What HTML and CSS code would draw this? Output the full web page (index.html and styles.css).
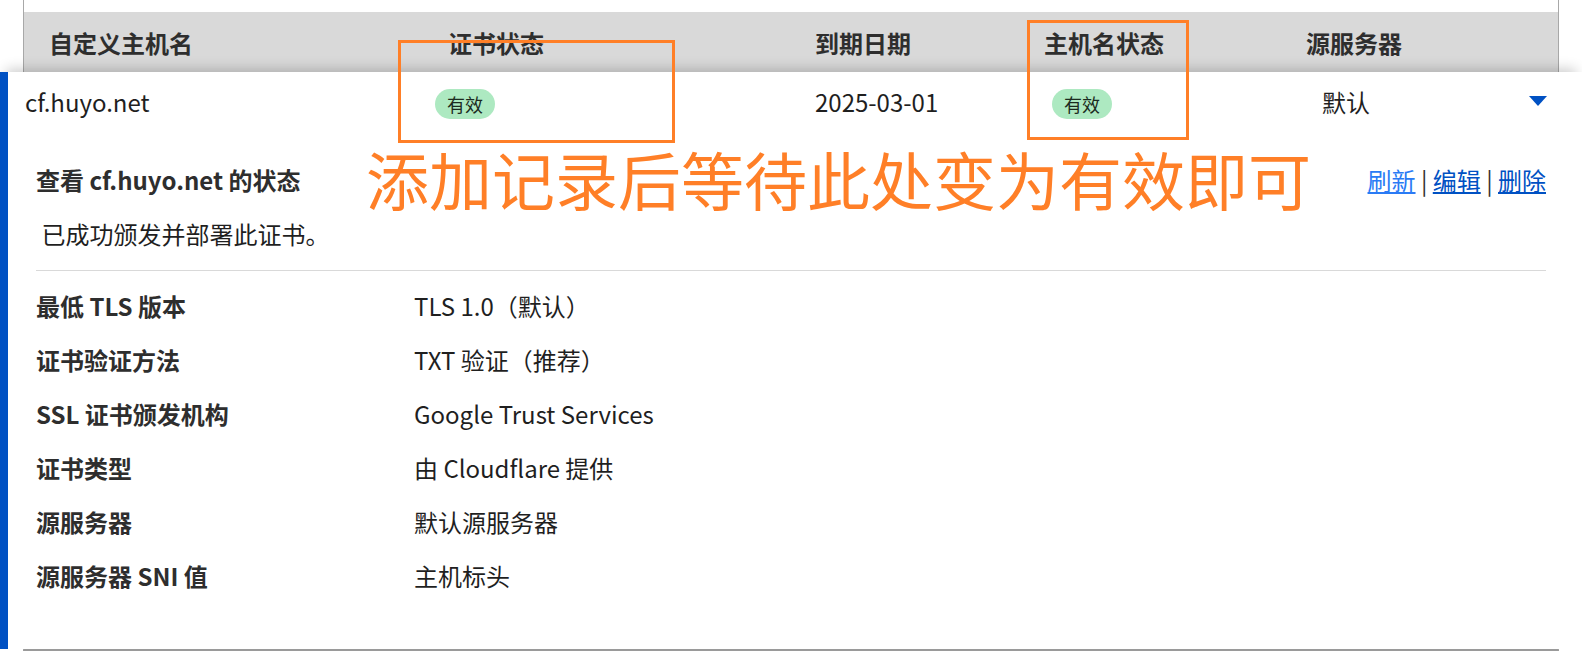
FILE: index.html
```html
<!DOCTYPE html>
<html lang="zh-CN">
<head>
    <meta charset="UTF-8">
    <meta name="viewport" content="width=device-width, initial-scale=1.0">
    <title>自定义主机名</title>
    <link rel="stylesheet" href="styles.css">
</head>
<body>

    <div class="table">
        <div class="thead">
            <div>自定义主机名</div>
            <div>证书状态</div>
            <div>到期日期</div>
            <div>主机名状态</div>
            <div>源服务器</div>
        </div>

        <div class="card">
            <div class="row">
                <div>cf.huyo.net</div>
                <div><span class="badge">有效</span></div>
                <div>2025-03-01</div>
                <div><span class="badge">有效</span></div>
                <div>默认</div>
                <div class="caret"></div>
            </div>

            <div class="detail">
                <div class="detail-head">
                    <h2 class="detail-title">查看 cf.huyo.net 的状态</h2>
                    <div class="actions">
                        <a href="#" class="link active">刷新</a> | <a href="#" class="link">编辑</a> | <a href="#" class="link">删除</a>
                    </div>
                </div>
                <p class="detail-note">&nbsp;已成功颁发并部署此证书。</p>

                <dl class="props">
                    <div class="prop"><dt>最低 TLS 版本</dt><dd>TLS 1.0（默认）</dd></div>
                    <div class="prop"><dt>证书验证方法</dt><dd>TXT 验证（推荐）</dd></div>
                    <div class="prop"><dt>SSL 证书颁发机构</dt><dd>Google Trust Services</dd></div>
                    <div class="prop"><dt>证书类型</dt><dd>由 Cloudflare 提供</dd></div>
                    <div class="prop"><dt>源服务器</dt><dd>默认源服务器</dd></div>
                    <div class="prop"><dt>源服务器 SNI 值</dt><dd>主机标头</dd></div>
                </dl>
            </div>
        </div>
    </div>

    <!-- annotations drawn over the screenshot -->
    <div class="mark mark-cert"></div>
    <div class="mark mark-host"></div>
    <div class="note">添加记录后等待此处变为有效即可</div>

</body>
</html>
```

FILE: styles.css
```css
body {
    margin: 0;
    position: relative;
    font-family: "Noto Sans CJK SC", "Noto Sans", sans-serif;
    font-size: 24px;
    color: #1f1f1f;
    background: #fff;
    overflow: hidden;
}

.table {
    margin: 0 23px;
    padding-top: 12px;
    border-left: 1px solid #a8a8a8;
    border-right: 1px solid #a8a8a8;
    border-bottom: 2px solid #9a9a9a;
}

.thead {
    display: grid;
    grid-template-columns: 399px 367px 229px 262px 1fr;
    align-items: center;
    height: 60px;
    padding-left: 25px;
    background: #d9d9d9;
    font-weight: bold;
    color: #2e2e2e;
}

.card {
    position: relative;
    margin: 0 -24px;
    border-left: 8px solid #0051c3;
    background: #fff;
    box-shadow: 0 -9px 12px -6px rgba(0, 0, 0, 0.2);
}

.row {
    display: grid;
    grid-template-columns: 410px 380px 237px 270px 1fr auto;
    align-items: center;
    height: 58px;
    padding: 0 35px 4px 17px;
}

.badge {
    display: inline-block;
    height: 30px;
    line-height: 30px;
    padding: 0 12px;
    border-radius: 15px;
    background: #ade9c1;
    color: #1c2a20;
    font-size: 18px;
    vertical-align: middle;
}

.caret {
    width: 0;
    height: 0;
    border-left: 9px solid transparent;
    border-right: 9px solid transparent;
    border-top: 10px solid #0051c3;
}

.detail {
    padding: 27px 36px 47px 28px;
}

.detail-head {
    display: flex;
    justify-content: space-between;
    align-items: center;
    height: 36px;
}

.detail-title {
    margin: 0;
    font-size: 24px;
    font-weight: bold;
    color: #2e2e2e;
}

.actions {
    color: #333;
}

.link {
    color: #0051c3;
}

.link.active {
    color: #2a7bf5;
}

.detail-note {
    margin: 19px 0 0;
    line-height: 36px;
}

.props {
    margin: 18px 0 0;
    padding-top: 7px;
    border-top: 1px solid #d9d9d9;
}

.prop {
    display: grid;
    grid-template-columns: 378px 1fr;
    align-items: center;
    height: 54px;
}

.prop dt {
    font-weight: bold;
    color: #2e2e2e;
}

.prop dd {
    margin: 0;
}

.mark {
    position: absolute;
    box-sizing: border-box;
    border: 3px solid #ff7f27;
}

.mark-cert {
    left: 398px;
    top: 40px;
    width: 277px;
    height: 103px;
}

.mark-host {
    left: 1027px;
    top: 20px;
    width: 162px;
    height: 120px;
}

.note {
    position: absolute;
    left: 366px;
    top: 146px;
    font-size: 63px;
    line-height: 1;
    color: #ff7f27;
    white-space: nowrap;
}
```
